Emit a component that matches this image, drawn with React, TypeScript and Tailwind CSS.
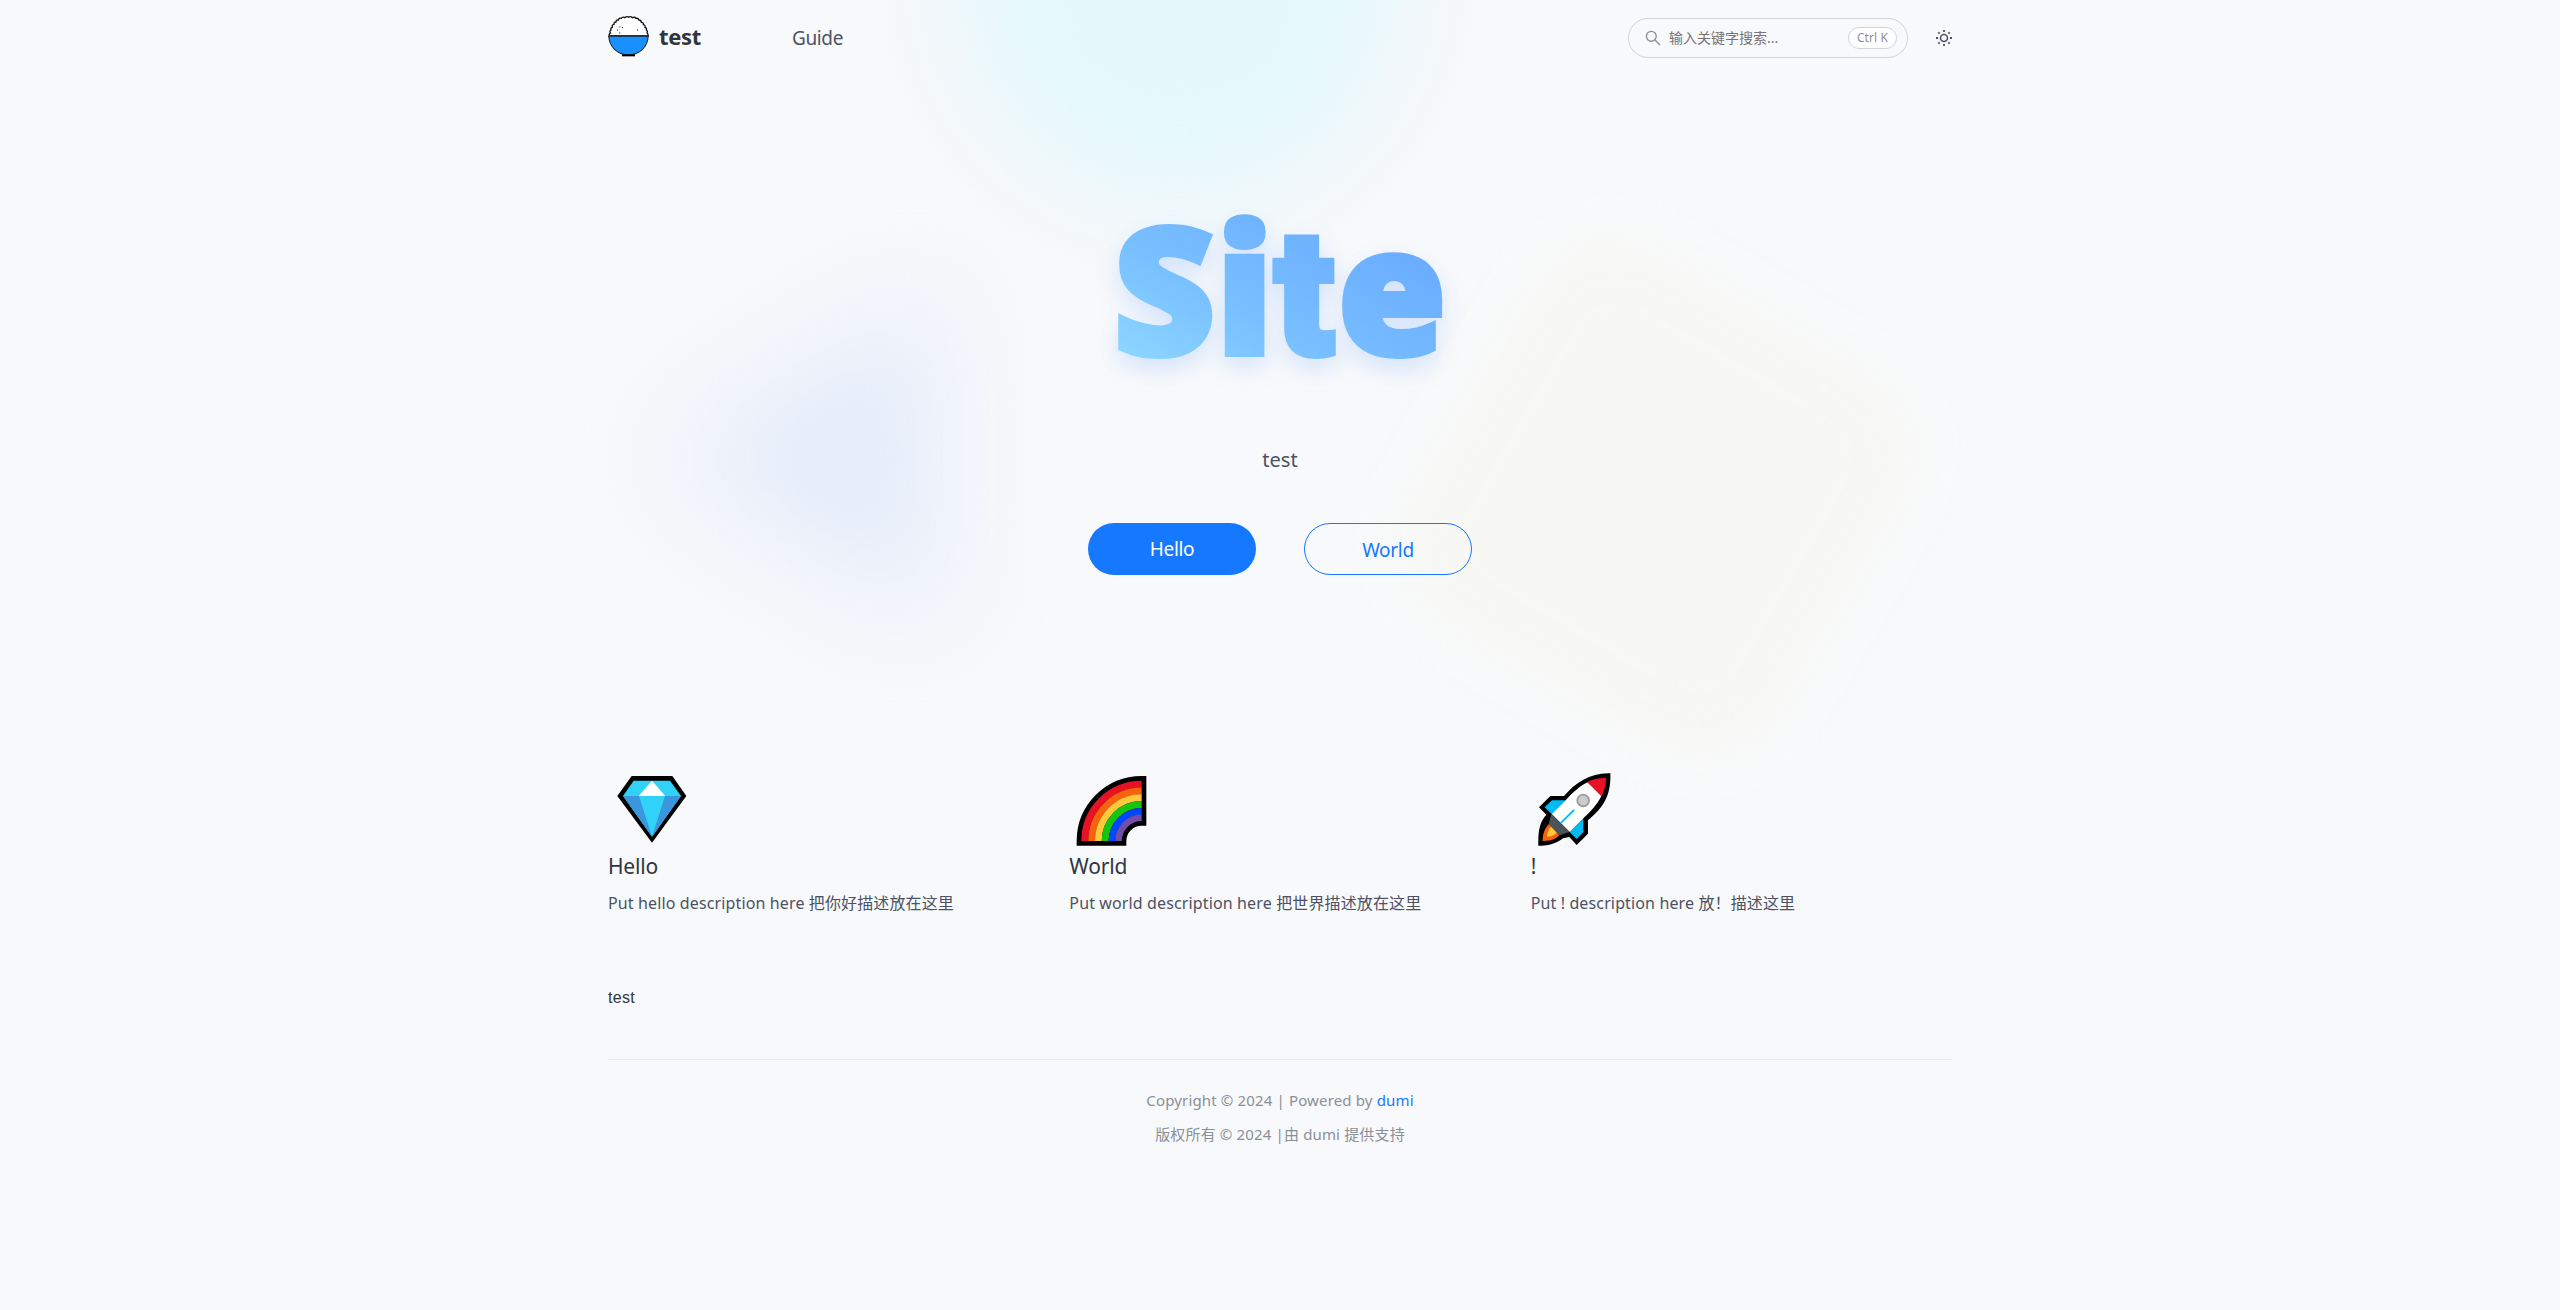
import React from "react";

function BowlLogo() {
  return (
    <svg className="h-[41px] w-[41px] shrink-0" viewBox="54 46 123 123" fill="none">
      <path
        d="M57 106 Q57 98 61 97 Q58 90 63 88 Q61 81 67 80 Q65 72 72 71 Q71 64 78 64 Q78 57 85 58 Q87 51 94 53 Q98 47 104 51 Q110 46 116 49.500 Q122 46 127 51 Q134 48 138 53 Q145 52 147 58 Q154 58 154 65 Q161 65 160 72 Q167 73 165 80 Q171 82 169 88 Q174 91 171 97 Q175 99 174.500 106 Z"
        fill="#fff"
        stroke="#111"
        strokeWidth="4"
      />
      <path d="M56.500 106 A59 57 0 0 0 174.500 106 Z" fill="#1890ff" stroke="#111" strokeWidth="3" />
      <path d="M56 106.500 H175" stroke="#24364d" strokeWidth="4" />
      <path d="M96 164 H135" stroke="#000" strokeWidth="6" />
      <path d="M88 79h3M96 81h3M81 88h3M88 97h3M141 88h3" stroke="#111" strokeWidth="3" />
    </svg>
  );
}

function Diamond() {
  return (
    <svg className="block size-20" viewBox="54 33 240 240">
      <path d="M125 51H247L289 111L186 251L82 111Z" fill="#000" />
      <path d="M131 65H240L273 111L186 233L99 111Z" fill="#31d2f7" />
      <path d="M99 111H147L186 233ZM273 111H225L186 233Z" fill="#3a96dd" />
      <path d="M186 65L226 111H146Z" fill="#fff" />
    </svg>
  );
}

function Rainbow() {
  return (
    <svg className="block size-20" viewBox="58 33 240 240" fill="none">
      <path d="M95 246A181 181 0 0 1 276 65V186A60 60 0 0 0 216 246Z" fill="#000" stroke="#000" strokeWidth="28" />
      <path d="M105.500 246A170.500 170.500 0 0 1 276 75.500" stroke="#e81224" strokeWidth="21" />
      <path d="M126 246A150 150 0 0 1 276 96" stroke="#f7630c" strokeWidth="20.500" />
      <path d="M146 246A130 130 0 0 1 276 116" stroke="#ffc83d" strokeWidth="20.500" />
      <path d="M166.500 246A109.500 109.500 0 0 1 276 136.500" stroke="#16c60c" strokeWidth="21" />
      <path d="M187 246A89 89 0 0 1 276 157" stroke="#0046ff" strokeWidth="20.500" />
      <path d="M206.500 246A69.500 69.500 0 0 1 276 176.500" stroke="#744da9" strokeWidth="19.500" />
    </svg>
  );
}

function Rocket() {
  return (
    <svg className="block size-20" viewBox="62 33 240 240" fill="none">
      <path
        d="M300 43C240 41 197 70 161 111H120L86 145L108 167C89 188 83 212 84 260C120 262 142 250 158 238L177 234L199 258L233 224V184C284 142 302 105 300 43Z"
        fill="#000"
      />
      <path d="M103 145L125 124H166L124 165ZM178 219L219 178V219L199 240Z" fill="#00bcf2" />
      <path d="M232 70L273 111C262 135 240 158 219 178L178 219L124 165L166 124C186 102 208 81 232 70Z" fill="#fff" />
      <path d="M287 57C287 78 282 96 274 112L231 69C249 60 267 56 287 57Z" fill="#e81224" />
      <path d="M123 165L178 219L147 229C136 220 122 208 115 196Z" fill="#4a5459" />
      <path d="M115 196L147 229C134 241 120 247 97 246C97 224 103 209 115 196Z" fill="#f7630c" />
      <path d="M122 203L139 221C130 229 122 233 110 233C111 220 114 211 122 203Z" fill="#ffc83d" />
      <path d="M153 190L190 154" stroke="#00bcf2" strokeWidth="5.500" strokeLinecap="round" />
      <circle cx="218.500" cy="124.500" r="17.500" fill="#cccccc" stroke="#9b9b9b" strokeWidth="5.500" />
    </svg>
  );
}

function Glow() {
  return (
    <svg className="pointer-events-none absolute inset-x-0 top-0 -z-10 h-[900px] w-full" viewBox="0 0 2560 900" fill="none">
      <defs>
        <filter id="soft" x="-100%" y="-100%" width="300%" height="300%" colorInterpolationFilters="sRGB">
          <feGaussianBlur stdDeviation="54" />
        </filter>
        <filter id="softer" x="-100%" y="-100%" width="300%" height="300%" colorInterpolationFilters="sRGB">
          <feGaussianBlur stdDeviation="38" />
        </filter>
      </defs>
      <circle cx="1178" cy="-20" r="220" fill="#e3f8fb" filter="url(#soft)" />
      <path d="M685 440Q660 457 685 474L905 612Q940 630 940 595V320Q940 285 905 302Z" fill="#e4ecfa" filter="url(#soft)" />
      <rect x="1450" y="290" width="415" height="415" rx="70" transform="rotate(30 1657 497)" fill="#f7f8f3" filter="url(#softer)" />
    </svg>
  );
}

const features = [
  { icon: <Diamond />, title: "Hello", text: "Put hello description here 把你好描述放在这里" },
  { icon: <Rainbow />, title: "World", text: "Put world description here 把世界描述放在这里" },
  { icon: <Rocket />, title: "!", text: "Put ! description here 放！描述这里" },
];

export default function App() {
  return (
    <div className="relative isolate min-h-[1310px] overflow-hidden bg-[#f8f9fb] font-['Noto_Sans','Noto_Sans_CJK_SC',sans-serif] text-[#4d5164]">
      <Glow />
      <div className="mx-auto w-[1344px]">
        <header className="flex h-[76px] items-center">
          <a className="flex items-center gap-2.5 pb-1">
            <BowlLogo />
            <span className="text-[22px] font-bold tracking-[-0.3px] text-[#30363f]">test</span>
          </a>
          <nav className="ml-[91px] text-[19px] tracking-[-0.4px]">Guide</nav>
          <div className="ml-auto flex h-10 w-[280px] items-center rounded-[20px] border border-[#d0d5d8] pr-2.5 pl-4">
            <svg className="size-4" viewBox="0 0 16 16" fill="none" stroke="#8a9099" strokeWidth="1.400">
              <circle cx="6.300" cy="6.300" r="4.900" />
              <path d="M9.800 9.800L15 15" />
            </svg>
            <span className="ml-2 flex-1 text-sm text-[#757575]">输入关键字搜索...</span>
            <span className="flex h-[22px] w-[49px] items-center justify-center rounded-[11px] border border-[#d0d5d8] bg-white text-xs tracking-[0.1px] text-[#8a9099]">
              Ctrl K
            </span>
          </div>
          <svg className="-mr-px ml-[27px] size-[18px]" viewBox="0 0 18 18" fill="none" stroke="#4d5164">
            <circle cx="9" cy="9" r="3.500" strokeWidth="1.600" />
            <path
              d="M9 1v2M9 15v2M1 9h2M15 9h2M3.300 3.300l1.400 1.400M13.300 13.300l1.400 1.400M3.300 14.700l1.400-1.400M13.300 4.700l1.400-1.400"
              strokeWidth="1.800"
            />
          </svg>
        </header>

        <section className="flex h-[694px] flex-col items-center pt-[108px]">
          <h1 className="h-[220px] bg-[linear-gradient(30deg,#8bd5ff_15%,#79c0ff_40%,#69abff_80%)] bg-clip-text px-4 font-['Roboto',sans-serif] text-[176px] leading-[220px] font-black whitespace-nowrap text-transparent drop-shadow-[0_10px_12px_rgba(23,120,255,0.16)] [-webkit-text-stroke:6px_transparent]">
            <span className="mr-px font-['Noto_Sans'] leading-none">S</span>
            <span className="mr-px font-['Noto_Sans'] leading-none">i</span>
            <span className="mr-[3px]">t</span>
            <span className="font-['Noto_Sans'] leading-none">e</span>
          </h1>
          <p className="mt-[41px] text-xl leading-[30px]">test</p>
          <div className="mt-12 flex gap-12 text-[19px] tracking-[-0.3px]">
            <a className="flex h-[52px] w-[168px] items-center justify-center rounded-[26px] bg-[#1677ff] text-white">Hello</a>
            <a className="flex h-[52px] w-[168px] items-center justify-center rounded-[26px] border border-[#1677ff] pt-0.5 text-[#1677ff]">
              World
            </a>
          </div>
        </section>

        <section className="grid grid-cols-3 gap-10">
          {features.map((f) => (
            <article key={f.title} className="h-[190px]">
              {f.icon}
              <h3 className="mt-px text-[21px] leading-[30px] tracking-[-0.2px] text-[#30363f]">{f.title}</h3>
              <p className="mt-2.5 text-base leading-6 tracking-[0.13px]">{f.text}</p>
            </article>
          ))}
        </section>

        <main className="h-[99px] pt-[26px] font-['Liberation_Sans',sans-serif] text-base tracking-[0.3px] text-[#30363f]">test</main>

        <footer className="border-t border-[#e4e9ec] pt-[23px] text-center text-[15px] leading-[34px] tracking-[0.15px] text-[#8a9099]">
          <p>
            Copyright © 2024 | Powered by <a className="text-[#1677ff]">dumi</a>
          </p>
          <p>版权所有 © 2024 |由 dumi 提供支持</p>
        </footer>
      </div>
    </div>
  );
}
